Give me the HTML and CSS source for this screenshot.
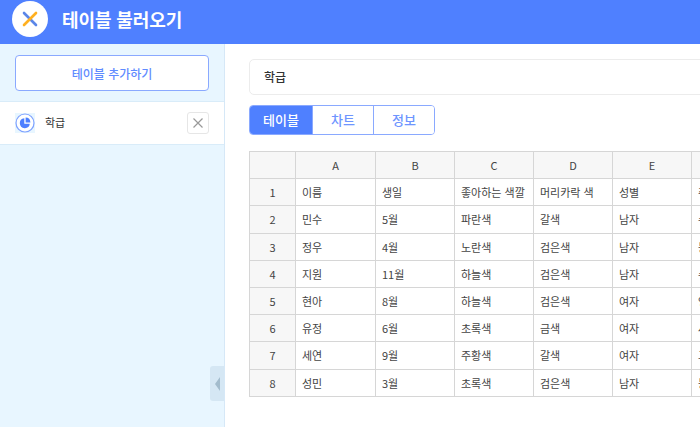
FILE: index.html
```html
<!DOCTYPE html>
<html lang="ko">

<head>
  <meta charset="utf-8">
  <title>테이블 불러오기</title>
  <link rel="stylesheet" href="styles.css">
</head>

<body>
  <header class="top-bar">
    <div class="logo">
      <svg width="22" height="22" viewBox="0 0 22 22">
        <path d="M5 5L17 17" stroke="#5b86e8" stroke-width="2.6" stroke-linecap="round" />
        <path d="M17 5L5 17" stroke="#ffb020" stroke-width="2.6" stroke-linecap="round" />
      </svg>
    </div>
    <h1>테이블 불러오기</h1>
  </header>

  <div class="layout">
    <aside class="sidebar">
      <div class="add-area">
        <button class="add-btn" type="button">테이블 추가하기</button>
      </div>
      <div class="table-item">
        <span class="pie-icon">
          <svg width="20" height="20" viewBox="0 0 20 20">
            <circle cx="10" cy="10" r="9" fill="#fff" stroke="#7fa2ff" stroke-width="1.2" />
            <path d="M9.3 5.2A5 5 0 1 0 14.8 10.8H9.3Z" fill="#4d7fff" />
            <path d="M10.6 4.6A5 5 0 0 1 15.4 9.4H10.6Z" fill="#4d7fff" />
          </svg>
        </span>
        <span class="item-name">학급</span>
        <button class="close-btn" type="button">
          <svg width="12" height="12" viewBox="0 0 12 12">
            <path d="M1.5 1.5L10.5 10.5M10.5 1.5L1.5 10.5" stroke="#999" stroke-width="1.2" />
          </svg>
        </button>
      </div>
      <div class="collapse-tab"><span class="arrow"></span></div>
    </aside>

    <main class="content">
      <div class="name-box">학급</div>
      <div class="tabs">
        <div class="tab active">테이블</div>
        <div class="tab">차트</div>
        <div class="tab">정보</div>
      </div>
      <table class="sheet">
        <colgroup>
          <col class="col-num">
          <col class="col-a">
          <col class="col-cell">
          <col class="col-cell">
          <col class="col-cell">
          <col class="col-cell">
          <col class="col-cell">
        </colgroup>
        <tr class="head-row"><th></th><th>A</th><th>B</th><th>C</th><th>D</th><th>E</th><th>F</th></tr>
        <tr><th>1</th><td>이름</td><td>생일</td><td>좋아하는 색깔</td><td>머리카락 색</td><td>성별</td><td>취미</td></tr>
        <tr><th>2</th><td>민수</td><td>5월</td><td>파란색</td><td>갈색</td><td>남자</td><td>수영</td></tr>
        <tr><th>3</th><td>정우</td><td>4월</td><td>노란색</td><td>검은색</td><td>남자</td><td>등산</td></tr>
        <tr><th>4</th><td>지원</td><td>11월</td><td>하늘색</td><td>검은색</td><td>남자</td><td>수영</td></tr>
        <tr><th>5</th><td>현아</td><td>8월</td><td>하늘색</td><td>검은색</td><td>여자</td><td>영화</td></tr>
        <tr><th>6</th><td>유정</td><td>6월</td><td>초록색</td><td>금색</td><td>여자</td><td>사진</td></tr>
        <tr><th>7</th><td>세연</td><td>9월</td><td>주황색</td><td>갈색</td><td>여자</td><td>그림</td></tr>
        <tr><th>8</th><td>성민</td><td>3월</td><td>초록색</td><td>검은색</td><td>남자</td><td>등산</td></tr>
      </table>
    </main>
  </div>
</body>

</html>
```

FILE: styles.css
```css
* {
  box-sizing: border-box;
}

html,
body {
  height: 100%;
}

body {
  margin: 0;
  overflow: hidden;
  display: flex;
  flex-direction: column;
  font-family: "Noto Sans CJK KR", "Noto Sans", sans-serif;
  color: #333;
  background: #fff;
}

/* header */
.top-bar {
  height: 44px;
  flex: none;
  display: flex;
  align-items: center;
  gap: 14px;
  padding: 0 0 6px 12px;
  background: #4f80ff;
}

.top-bar h1 {
  margin: 0;
  font-size: 18px;
  font-weight: 700;
  letter-spacing: -0.1px;
  color: #fff;
}

.logo {
  width: 36px;
  height: 36px;
  display: flex;
  align-items: center;
  justify-content: center;
  border-radius: 50%;
  background: #fff;
}

.layout {
  flex: 1;
  display: flex;
  min-height: 0;
}

/* sidebar */
.sidebar {
  position: relative;
  width: 225px;
  flex: none;
  background: #e8f6ff;
  border-right: 1px solid #d6e8f7;
}

.add-area {
  padding: 11px 15px 10px;
}

.add-btn {
  display: block;
  width: 194px;
  height: 36px;
  padding: 0;
  font-family: inherit;
  font-size: 12px;
  font-weight: 500;
  color: #5f8bff;
  background: #fff;
  border: 1px solid #8aa9ff;
  border-radius: 4px;
}

.table-item {
  height: 44px;
  display: flex;
  align-items: center;
  padding: 0 15px;
  background: #fff;
  border-top: 1px solid #d9ecf9;
  border-bottom: 1px solid #d9ecf9;
}

.pie-icon {
  width: 20px;
  height: 20px;
  display: block;
  background: #e8f6ff;
}

.pie-icon svg {
  display: block;
}

.item-name {
  margin-left: 10px;
  flex: 1;
  font-size: 11px;
  line-height: 16px;
  margin-top: -3px;
}

.close-btn {
  width: 22px;
  height: 22px;
  padding: 0;
  display: flex;
  align-items: center;
  justify-content: center;
  background: #fff;
  border: 1px solid #e6e6e6;
  border-radius: 3px;
}

.collapse-tab {
  position: absolute;
  right: 0;
  top: 322px;
  width: 14px;
  height: 35px;
  display: flex;
  align-items: center;
  justify-content: center;
  background: #d5e7f4;
  border-radius: 3px 0 0 3px;
}

.arrow {
  width: 0;
  height: 0;
  border-top: 7px solid transparent;
  border-bottom: 7px solid transparent;
  border-right: 5px solid #a3bccd;
}

/* main */
.content {
  flex: 1;
  min-width: 0;
  padding: 15px 0 0 24px;
  overflow: hidden;
}

.name-box {
  width: 520px;
  height: 36px;
  padding-left: 14px;
  font-size: 12px;
  font-weight: 500;
  line-height: 34px;
  border: 1px solid #ececec;
  border-radius: 5px;
}

.tabs {
  width: 186px;
  height: 30px;
  margin-top: 10px;
  display: flex;
  border: 1px solid #8aa9ff;
  border-radius: 4px;
  overflow: hidden;
}

.tab {
  flex: 1;
  font-size: 13px;
  font-weight: 500;
  line-height: 27px;
  text-align: center;
  color: #6e95ff;
  background: #fff;
}

.tab + .tab {
  border-left: 1px solid #8aa9ff;
}

.tab.active {
  flex: none;
  width: 62px;
  color: #fff;
  background: #4f80ff;
}

.sheet {
  width: 522px;
  margin-top: 16px;
  table-layout: fixed;
  border-collapse: collapse;
  font-size: 11px;
  color: #444;
}

.col-num {
  width: 46px;
}

.col-a {
  width: 80px;
}

.col-cell {
  width: 79px;
}

.sheet tr {
  height: 27.2px;
}

.sheet th,
.sheet td {
  padding: 0 6px;
  border: 1px solid #d6d6d6;
  white-space: nowrap;
  overflow: hidden;
}

.sheet th {
  font-weight: 400;
  text-align: center;
  background: #f7f7f7;
}

.sheet td {
  background: #fff;
}
```
